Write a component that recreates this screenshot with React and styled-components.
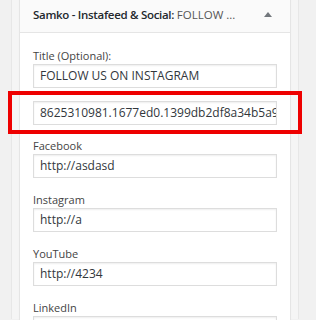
import React from "react";
import styled, { createGlobalStyle } from "styled-components";

const GlobalStyle = createGlobalStyle`
  html, body {
    margin: 0;
    padding: 0;
    background: #f1f1f1;
    font-family: "Open Sans", "Liberation Sans", sans-serif;
    overflow: hidden;
  }
`;

const Page = styled.div`
  position: relative;
  width: 316px;
  height: 320px;
  padding-left: 11px;
  box-sizing: border-box;
  overflow: hidden;
`;

const Sidebar = styled.div`
  width: 288px;
  height: 100%;
  padding: 0 7px;
  box-sizing: border-box;
  background: #f5f5f5;
  border-left: 1px solid #e7e7e7;
  border-right: 1px solid #e7e7e7;
`;

const Widget = styled.div`
  margin-top: -1px;
  background: #fff;
  border: 1px solid #e5e5e5;
  box-shadow: 0 1px 1px rgba(0, 0, 0, 0.04);
`;

const WidgetTop = styled.div`
  display: flex;
  align-items: center;
  justify-content: space-between;
  height: 33px;
  padding: 0 14px 4px 13px;
  box-sizing: border-box;
  background: #fafafa;
  border-bottom: 1px solid #e5e5e5;
`;

const WidgetTitle = styled.h3`
  margin: 0;
  font-size: 11.5px;
  font-weight: 600;
  letter-spacing: -0.3px;
  color: #23282d;
  white-space: nowrap;

  span {
    font-weight: 400;
    letter-spacing: 0;
    color: #555;
  }
`;

const Arrow = styled.span`
  width: 0;
  height: 0;
  margin-right: 4px;
  border-left: 4px solid transparent;
  border-right: 4px solid transparent;
  border-bottom: 5px solid #72777c;
`;

const Body = styled.div`
  padding: 15px 13px 20px 13px;
`;

const Field = styled.div`
  display: flex;
  flex-direction: column;
  margin-bottom: ${(p) => p.gap ?? 14}px;
`;

const Label = styled.label`
  font-size: 11px;
  line-height: 16px;
  color: #444;
`;

const Input = styled.div`
  height: 24px;
  box-sizing: border-box;
  padding: 0 6px;
  border: 1px solid #ddd;
  box-shadow: inset 0 1px 2px rgba(0, 0, 0, 0.07);
  font-size: 12px;
  line-height: 22px;
  color: #32373c;
  white-space: nowrap;
  overflow: hidden;
`;

const Highlight = styled.div`
  position: absolute;
  left: 8px;
  top: 91px;
  width: 294px;
  height: 43px;
  box-sizing: border-box;
  border: 4px solid #ee0000;
`;

const fields = [
  { label: "Facebook", value: "http://asdasd" },
  { label: "Instagram", value: "http://a" },
  { label: "YouTube", value: "http://4234" },
  { label: "LinkedIn", value: "" },
];

export default function App() {
  return (
    <Page>
      <GlobalStyle />
      <Sidebar>
        <Widget>
          <WidgetTop>
            <WidgetTitle>
              Samko - Instafeed &amp; Social: <span>FOLLOW ...</span>
            </WidgetTitle>
            <Arrow />
          </WidgetTop>
          <Body>
            <Field gap={13}>
              <Label>Title (Optional):</Label>
              <Input>FOLLOW US ON INSTAGRAM</Input>
            </Field>
            <Field gap={13}>
              <Input>8625310981.1677ed0.1399db2df8a34b5a9d0e9d0e9</Input>
            </Field>
            {fields.map((f) => (
              <Field key={f.label}>
                <Label>{f.label}</Label>
                <Input>{f.value}</Input>
              </Field>
            ))}
          </Body>
        </Widget>
      </Sidebar>
      <Highlight />
    </Page>
  );
}
